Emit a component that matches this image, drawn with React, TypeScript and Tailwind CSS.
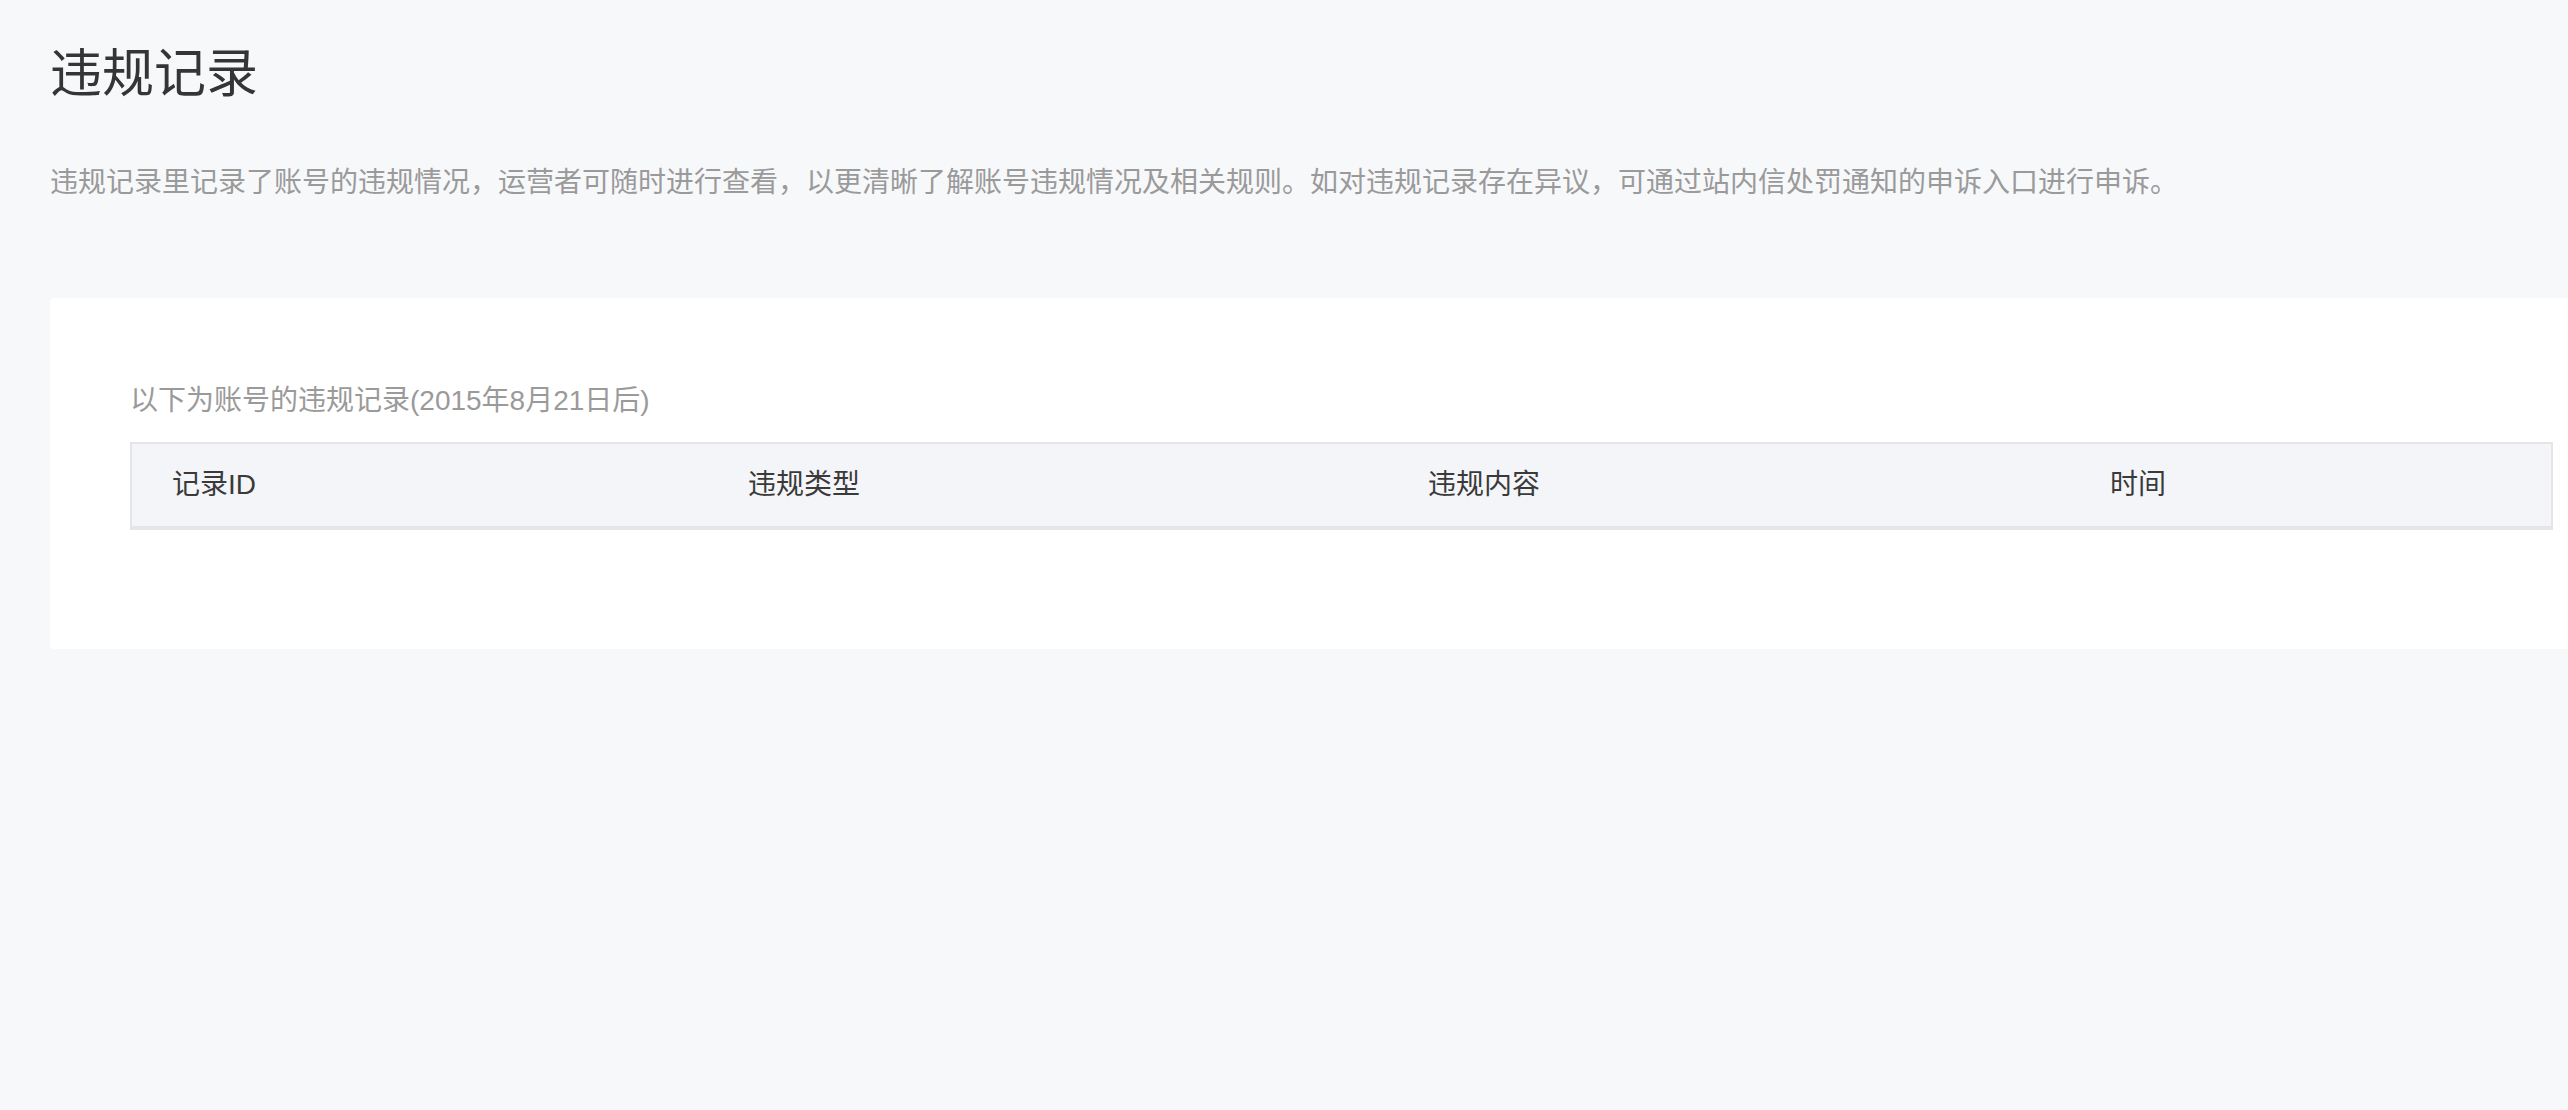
import React from 'react';

const columns = [
  { label: '记录ID', width: 'w-[576px]' },
  { label: '违规类型', width: 'w-[680px]' },
  { label: '违规内容', width: 'w-[682px]' },
  { label: '时间', width: 'flex-1' },
];

const App: React.FC = () => {
  return (
    <div
      className="min-h-[1110px] w-full overflow-hidden bg-[#f7f8fa] pl-[50px]"
      style={{ fontFamily: '"Liberation Sans", "Noto Sans CJK SC", sans-serif' }}
    >
      <h1 className="pt-[38px] text-[52px] leading-[72px] font-normal text-[#353535]">违规记录</h1>

      <p className="mt-[50px] text-[28px] leading-[45px] text-[#9a9a9a]">
        违规记录里记录了账号的违规情况，运营者可随时进行查看，以更清晰了解账号违规情况及相关规则。如对违规记录存在异议，可通过站内信处罚通知的申诉入口进行申诉。
      </p>

      {/* Record card */}
      <div className="mt-[93px] w-[2583px] rounded-[4px] bg-white px-[80px] pt-[80px] pb-[119px]">
        <div className="text-[28px] leading-[45px] text-[#9a9a9a]">以下为账号的违规记录(2015年8月21日后)</div>

        <div className="mt-[19px] border-2 border-b-4 border-[#e4e4e9] bg-[#f4f5f9]">
          <div className="flex h-[82px] items-center">
            {columns.map((col) => (
              <div key={col.label} className={`${col.width} px-[40px] text-[28px] text-[#3a3a3a]`}>
                {col.label}
              </div>
            ))}
          </div>
        </div>
      </div>
    </div>
  );
};

export default App;
